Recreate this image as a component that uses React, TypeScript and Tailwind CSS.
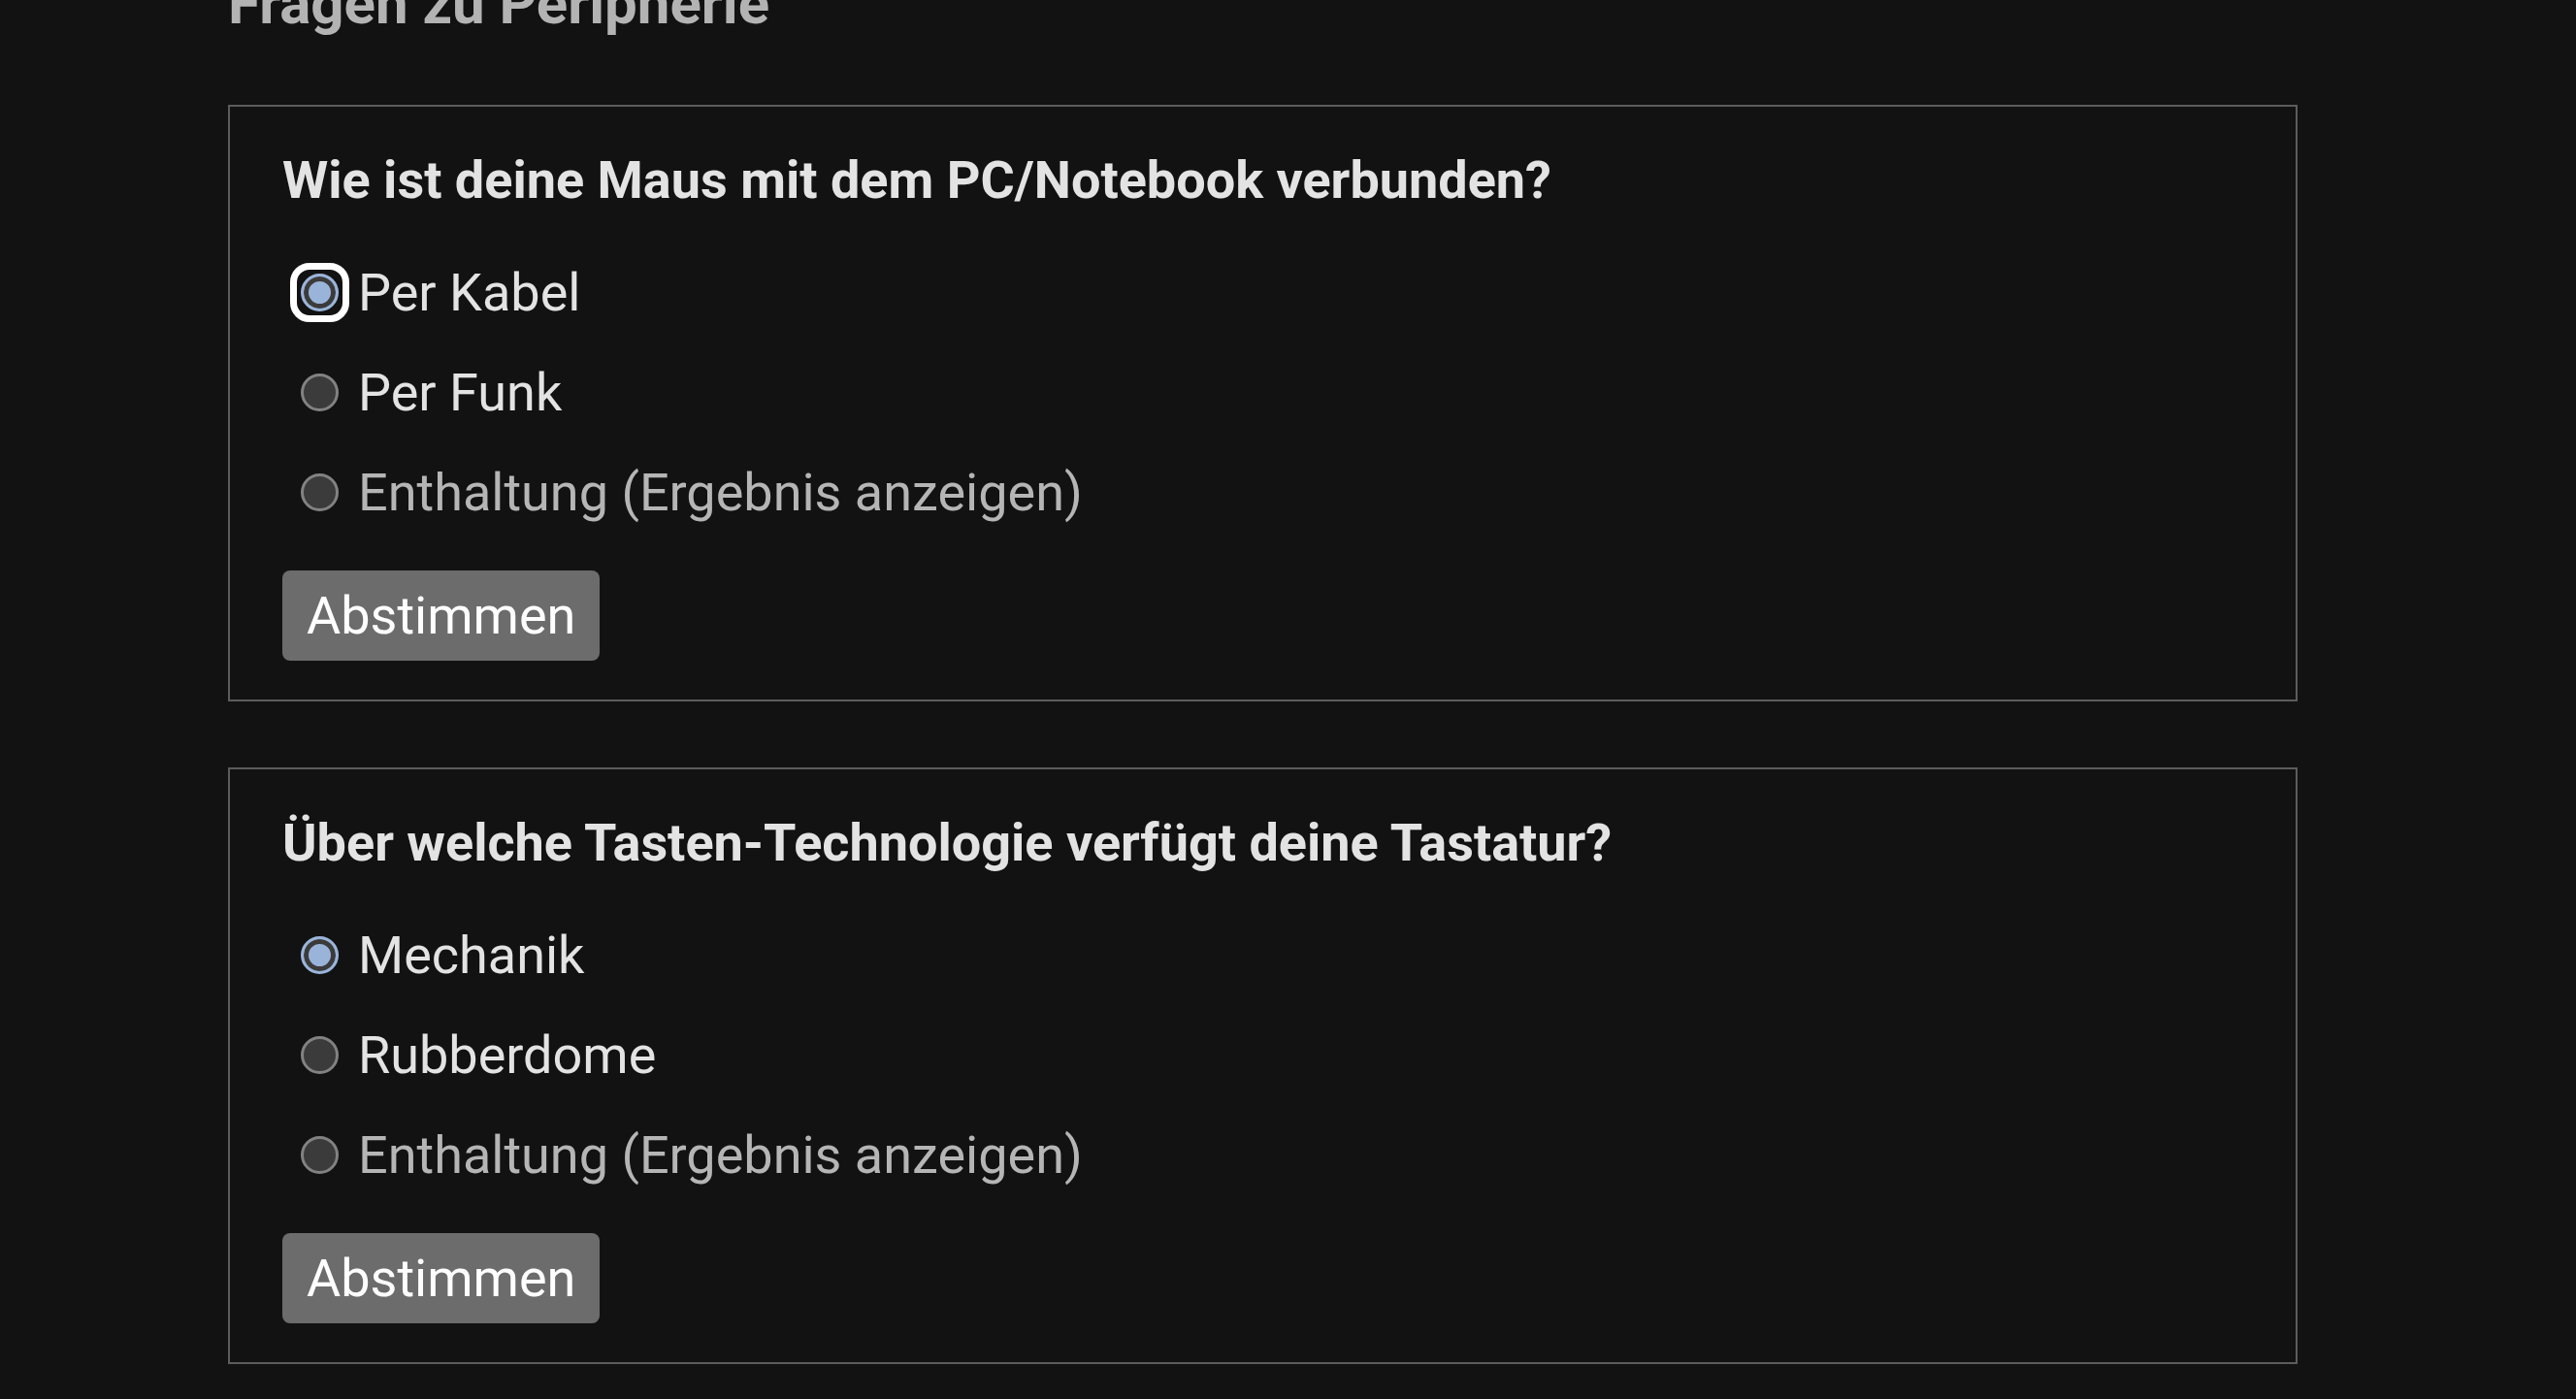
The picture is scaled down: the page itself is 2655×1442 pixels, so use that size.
import React from "react";

interface Poll {
  id: string;
  question: string;
  options: string[];
  checked: number;
  focused?: boolean;
}

const polls: Poll[] = [
  {
    id: "maus",
    question: "Wie ist deine Maus mit dem PC/Notebook verbunden?",
    options: ["Per Kabel", "Per Funk"],
    checked: 0,
    focused: true,
  },
  {
    id: "tastatur",
    question: "Über welche Tasten-Technologie verfügt deine Tastatur?",
    options: ["Mechanik", "Rubberdome"],
    checked: 0,
  },
];

function Radio({ checked, focused }: { checked: boolean; focused?: boolean }) {
  return (
    <span className="relative ml-[19px] mr-[20px] shrink-0 w-[39px] h-[39px]">
      <span
        className={
          checked
            ? "block w-[39px] h-[39px] rounded-full border-[3px] border-[#9ab4d9] bg-[#9ab4d9] shadow-[inset_0_0_0_5px_#3b3b3b]"
            : "block w-[39px] h-[39px] rounded-full border-[3px] border-[#828282] bg-[#3b3b3b]"
        }
      />
      {focused && <span className="absolute -inset-[11px] rounded-[20px] border-[7px] border-white" />}
    </span>
  );
}

function PollBox({ poll }: { poll: Poll }) {
  const all = [...poll.options, "Enthaltung (Ergebnis anzeigen)"];
  return (
    <form className="border-2 border-[#5c5c5c] px-[54px] pt-[46px] pb-[40px]">
      <h3 className="text-[54px] leading-[60px] font-bold text-[#e3e3e3]">{poll.question}</h3>
      <div className="mt-[34px] flex flex-col">
        {all.map((opt, i) => {
          const abstain = i === all.length - 1;
          return (
            <label key={opt} className="h-[103px] flex items-center">
              <Radio checked={i === poll.checked} focused={poll.focused && i === poll.checked} />
              <span className={abstain ? "text-[54px] text-[#b5b5b5]" : "text-[54px] text-[#e3e3e3]"}>{opt}</span>
            </label>
          );
        })}
      </div>
      <button type="button" className="mt-[29px] h-[93px] px-[25px] rounded-[8px] bg-[#6c6c6c] text-white text-[54px] leading-none">
        Abstimmen
      </button>
    </form>
  );
}

export default function App() {
  return (
    <div className="min-h-screen bg-[#121212] overflow-hidden font-['Roboto',sans-serif] pl-[235px]">
      <div className="w-[2133px]">
        <h2 className="-mt-[26px] text-[60px] leading-[60px] font-bold text-[#b3b3b3]">Fragen zu Peripherie</h2>
        <div className="mt-[74px] flex flex-col gap-[68px]">
          {polls.map((p) => (
            <PollBox key={p.id} poll={p} />
          ))}
        </div>
      </div>
    </div>
  );
}
